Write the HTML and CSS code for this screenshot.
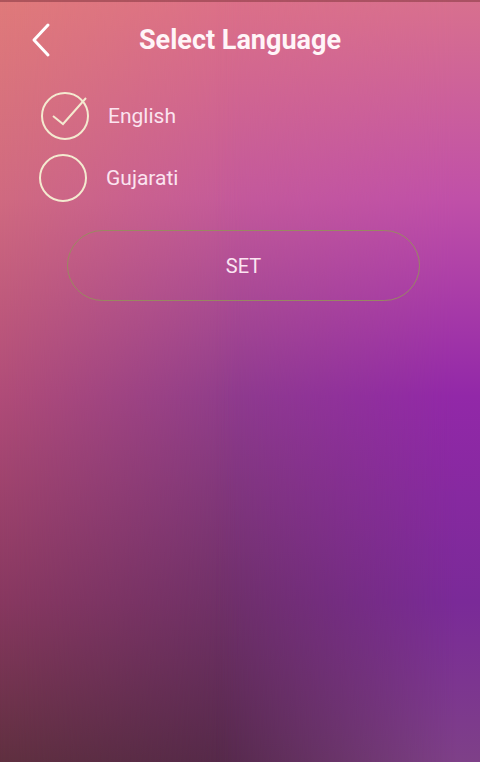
FILE: index.html
```html
<!DOCTYPE html>
<html>
<head>
<meta charset="utf-8">
<link rel="stylesheet" href="styles.css">
</head>
<body>
<div class="screen">
  <div class="content">
    <div class="header">
      <button class="back" aria-label="Back">
        <svg width="24" height="36" viewBox="0 0 24 36"><path d="M19 3 L5 18 L19 33" fill="none" stroke="#fff" stroke-width="3" stroke-linecap="round" stroke-linejoin="round"/></svg>
      </button>
      <h1 class="title">Select Language</h1>
    </div>
    <div class="list">
      <div class="row row-first">
        <svg class="radio" width="50" height="50" viewBox="0 0 50 50"><circle cx="25" cy="25" r="23" fill="none" stroke="#f4ead0" stroke-width="2"/><path d="M13 25 L23 33 L46 7" fill="none" stroke="#f4ead0" stroke-width="2" stroke-linejoin="miter"/></svg>
        <span class="label">English</span>
      </div>
      <div class="row">
        <svg class="radio" width="50" height="50" viewBox="0 0 50 50"><circle cx="25" cy="25" r="23" fill="none" stroke="#f4ead0" stroke-width="2"/></svg>
        <span class="label">Gujarati</span>
      </div>
    </div>
    <div class="actions">
      <button class="set">SET</button>
    </div>
  </div>
</div>
</body>
</html>
```
FILE: styles.css
```css
html, body {
  margin: 0;
  padding: 0;
}
body {
  width: 480px;
  height: 762px;
  overflow: hidden;
  font-family: Roboto, "Liberation Sans", sans-serif;
}
.screen {
  width: 480px;
  height: 762px;
  position: relative;
  overflow: hidden;
  background: linear-gradient(to bottom, #e07a7a 0%, #d06a80 26%, #b04c78 52%, #883860 79%, #603040 100%);
}
.screen::before,
.screen::after {
  content: "";
  position: absolute;
  inset: 0;
  pointer-events: none;
}
.screen::before {
  background: linear-gradient(to bottom, #dc7088 0%, #c45a9a 26%, #8e3c8c 52%, #6e3068 79%, #55294a 100%);
  -webkit-mask-image: linear-gradient(to right, transparent 0%, #000 50%, #000 100%);
  mask-image: linear-gradient(to right, transparent 0%, #000 50%, #000 100%);
}
.screen::after {
  background: linear-gradient(to bottom, #d8708e 0%, #c050a8 26%, #9228a8 52%, #7a2a98 79%, #7e4088 100%);
  -webkit-mask-image: linear-gradient(to right, transparent 45%, #000 95%);
  mask-image: linear-gradient(to right, transparent 45%, #000 95%);
}
.content {
  position: relative;
  z-index: 1;
  display: flex;
  flex-direction: column;
  height: 100%;
  box-sizing: border-box;
  border-top: 2px solid rgba(140, 60, 70, 0.6);
}
.header {
  height: 75px;
  display: flex;
  align-items: center;
  position: relative;
  justify-content: center;
}
.back {
  position: absolute;
  left: 29px;
  top: 20px;
  padding: 0;
  border: 0;
  background: none;
  display: flex;
}
.title {
  margin: 0;
  font-size: 27px;
  font-weight: 700;
  color: #fff5f8;
}
.list {
  display: flex;
  flex-direction: column;
  gap: 12px;
  padding: 14px 0 0 38px;
}
.row {
  display: flex;
  align-items: center;
  gap: 18px;
  height: 50px;
}
.row-first {
  margin-left: 2px;
}
.radio {
  overflow: visible;
  flex: none;
}
.label {
  font-size: 21px;
  color: #fbe4f0;
}
.actions {
  padding: 27px 0 0 67px;
}
.set {
  width: 353px;
  height: 71px;
  border-radius: 36px;
  border: 1.5px solid rgba(150, 142, 92, 0.9);
  background: transparent;
  font-family: Roboto, "Liberation Sans", sans-serif;
  font-size: 20px;
  color: #fbe4f2;
  padding: 0;
}
```
